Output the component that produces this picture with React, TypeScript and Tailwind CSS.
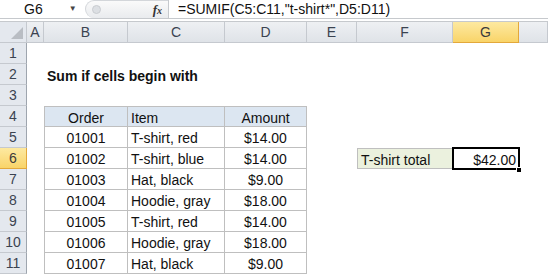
import React from "react";

const cols = ["A", "B", "C", "D", "E", "F", "G", ""];

const rows = [
  ["01001", "T-shirt, red", "$14.00"],
  ["01002", "T-shirt, blue", "$14.00"],
  ["01003", "Hat, black", "$9.00"],
  ["01004", "Hoodie, gray", "$18.00"],
  ["01005", "T-shirt, red", "$14.00"],
  ["01006", "Hoodie, gray", "$18.00"],
  ["01007", "Hat, black", "$9.00"],
];

const ColHeader = ({ label, active }: { label: string; active?: boolean }) => (
  <div
    className={
      active
        ? "flex items-center justify-center bg-gradient-to-b from-[#fde9a0] to-[#f9d468] border-r border-b border-[#e3a83b] text-[#3b3b3b]"
        : "flex items-center justify-center bg-gradient-to-b from-[#eef0f3] to-[#dfe3e8] border-r border-b border-[#c5c9cf] text-[#3b4350]"
    }
  >
    {label}
  </div>
);

const RowHeader = ({ n, active }: { n: number; active?: boolean }) => (
  <div
    className={
      active
        ? "flex items-center justify-center bg-gradient-to-b from-[#fde9a0] to-[#f9d468] border-r border-b border-[#e3a83b] text-[#3b3b3b]"
        : "flex items-center justify-center bg-[#e4e8ee] border-r border-b border-r-[#9ea5ae] border-b-[#c5c9cf] text-[#3b4350]"
    }
  >
    {n}
  </div>
);

export default function App() {
  return (
    <div className="w-[548px] h-[277px] overflow-hidden bg-white text-[14px] leading-none text-[#111] font-['Liberation_Sans',Arial,sans-serif]">
      {/* formula bar */}
      <div className="flex h-[19px] border-b border-[#c6c9cd]">
        <div className="flex w-[85px] items-center">
          <span className="pl-[24px] text-[#111]">G6</span>
          <span className="ml-[26px] text-[8px] text-[#444]">▼</span>
        </div>
        <div className="flex w-[83px] items-center rounded-l-full border-l border-t border-[#d3d6da] bg-gradient-to-b from-[#fafafa] to-[#e9ebee]">
          <div className="ml-[6px] h-[9px] w-[9px] rounded-full bg-[#dcdfe3] border border-[#c9ccd0]" />
          <span className="ml-auto mr-[6px] font-['Liberation_Serif',serif] italic font-bold text-[13px] text-[#333]">
            f<span className="text-[10px]">x</span>
          </span>
        </div>
        <div className="flex flex-1 items-center border-l border-[#c6c9cd] pl-[9px]">
          =SUMIF(C5:C11,"t-shirt*",D5:D11)
        </div>
      </div>
      <div className="h-[3px] bg-white border-b border-[#c6c9cd]" />

      {/* grid */}
      <div className="grid grid-cols-[27px_17px_84px_97px_82px_50px_96px_66px_1fr] grid-rows-[21px_repeat(11,21px)]">
        <div className="relative bg-[#e4e8ee] border-r border-b border-[#c5c9cf]">
          <svg className="absolute right-[3px] bottom-[3px]" width="12" height="12" viewBox="0 0 12 12">
            <polygon points="12,0 12,12 0,12" fill="#b9bdc3" />
          </svg>
        </div>
        {cols.map((c, i) => (
          <ColHeader key={i} label={c} active={c === "G"} />
        ))}

        {Array.from({ length: 11 }, (_, i) => {
          const r = i + 1;
          const cells: React.ReactNode[] = [];
          cells.push(<RowHeader key={`h${r}`} n={r} active={r === 6} />);
          for (let ci = 0; ci < 8; ci++) {
            const key = `${r}-${ci}`;
            if (r === 2 && ci === 1) {
              cells.push(
                <div key={key} className="flex items-center whitespace-nowrap pl-[3px] pt-[2px] font-bold text-[14px]">
                  Sum if cells begin with
                </div>
              );
            } else if (r === 4 && ci >= 1 && ci <= 3) {
              const label = ["Order", "Item", "Amount"][ci - 1];
              cells.push(
                <div
                  key={key}
                  className={`flex items-center bg-[#dce6f1] border-t border-r border-b border-[#bfbfbf] pt-[2px] ${
                    ci === 1 ? "border-l justify-center" : ci === 2 ? "justify-start pl-[3px]" : "justify-center"
                  }`}
                >
                  {label}
                </div>
              );
            } else if (r >= 5 && ci >= 1 && ci <= 3) {
              const v = rows[r - 5][ci - 1];
              cells.push(
                <div
                  key={key}
                  className={`flex items-center border-r border-b border-[#bfbfbf] pt-[2px] ${
                    ci === 1 ? "border-l justify-center" : ci === 2 ? "justify-start pl-[3px]" : "justify-center"
                  }`}
                >
                  {v}
                </div>
              );
            } else if (r === 6 && ci === 5) {
              cells.push(
                <div key={key} className="flex items-center bg-[#ebf1de] border border-[#bfbfbf] pl-[3px] pt-[2px]">
                  T-shirt total
                </div>
              );
            } else if (r === 6 && ci === 6) {
              cells.push(
                <div key={key} className="relative flex items-center justify-end pr-[3px] pt-[2px]">
                  $42.00
                  <div className="absolute -inset-[1px] border-2 border-black" />
                  <div className="absolute -right-[3px] -bottom-[4px] h-[6px] w-[6px] bg-black border border-white" />
                </div>
              );
            } else {
              cells.push(<div key={key} />);
            }
          }
          return <React.Fragment key={r}>{cells}</React.Fragment>;
        })}
      </div>
    </div>
  );
}
